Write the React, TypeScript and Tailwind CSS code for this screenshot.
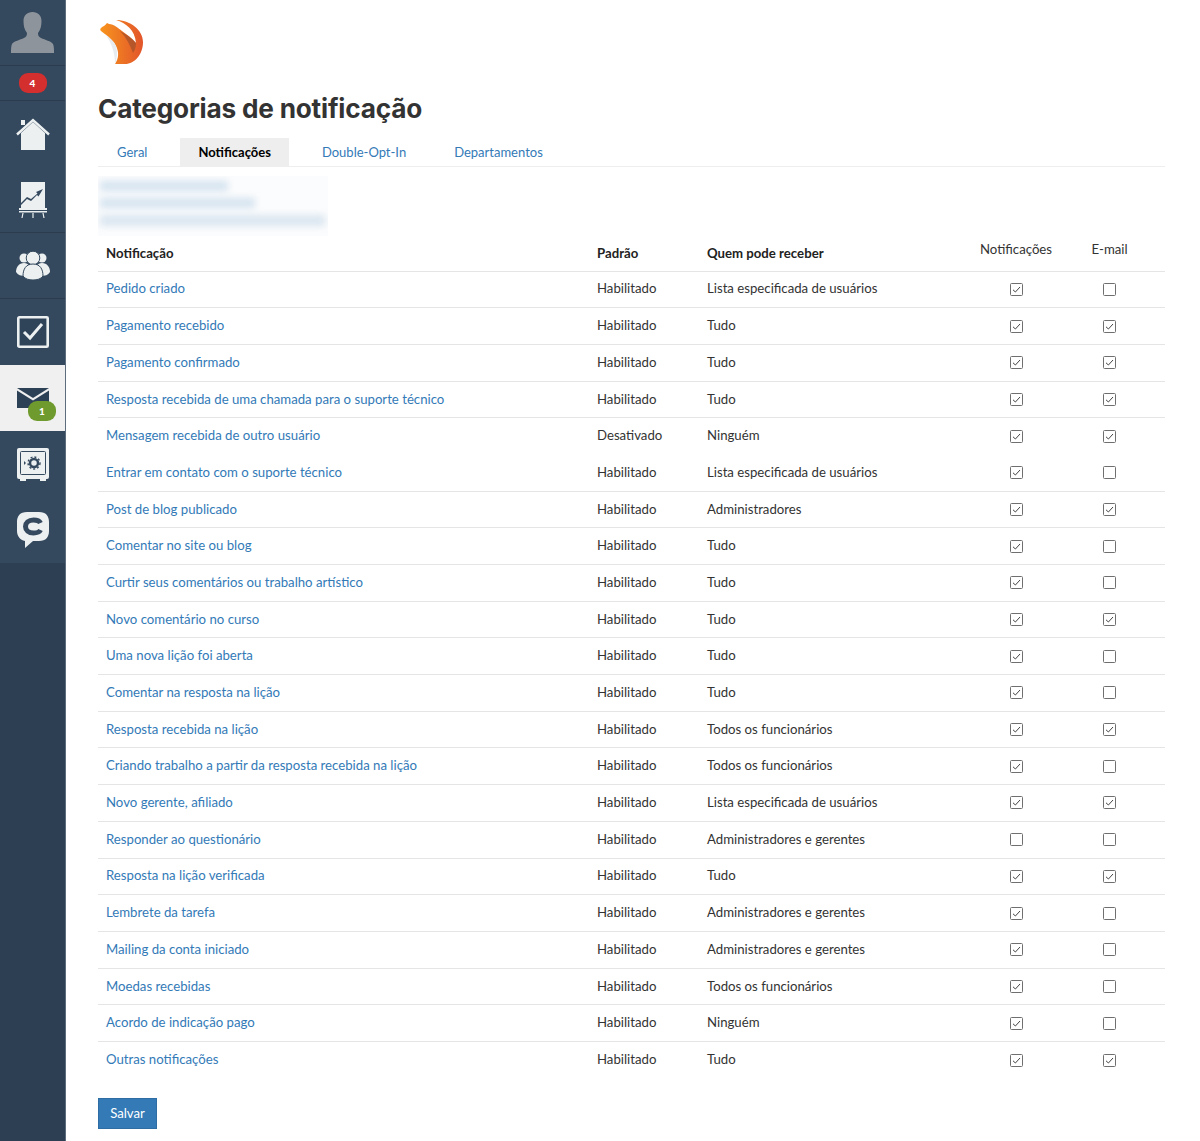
import React from "react";

type R = [string, string, string, boolean, boolean];
const rows: R[] = [
  ["Pedido criado", "Habilitado", "Lista especificada de usuários", true, false],
  ["Pagamento recebido", "Habilitado", "Tudo", true, true],
  ["Pagamento confirmado", "Habilitado", "Tudo", true, true],
  ["Resposta recebida de uma chamada para o suporte técnico", "Habilitado", "Tudo", true, true],
  ["Mensagem recebida de outro usuário", "Desativado", "Ninguém", true, true],
  ["Entrar em contato com o suporte técnico", "Habilitado", "Lista especificada de usuários", true, false],
  ["Post de blog publicado", "Habilitado", "Administradores", true, true],
  ["Comentar no site ou blog", "Habilitado", "Tudo", true, false],
  ["Curtir seus comentários ou trabalho artístico", "Habilitado", "Tudo", true, false],
  ["Novo comentário no curso", "Habilitado", "Tudo", true, true],
  ["Uma nova lição foi aberta", "Habilitado", "Tudo", true, false],
  ["Comentar na resposta na lição", "Habilitado", "Tudo", true, false],
  ["Resposta recebida na lição", "Habilitado", "Todos os funcionários", true, true],
  ["Criando trabalho a partir da resposta recebida na lição", "Habilitado", "Todos os funcionários", true, false],
  ["Novo gerente, afiliado", "Habilitado", "Lista especificada de usuários", true, true],
  ["Responder ao questionário", "Habilitado", "Administradores e gerentes", false, false],
  ["Resposta na lição verificada", "Habilitado", "Tudo", true, true],
  ["Lembrete da tarefa", "Habilitado", "Administradores e gerentes", true, false],
  ["Mailing da conta iniciado", "Habilitado", "Administradores e gerentes", true, false],
  ["Moedas recebidas", "Habilitado", "Todos os funcionários", true, false],
  ["Acordo de indicação pago", "Habilitado", "Ninguém", true, false],
  ["Outras notificações", "Habilitado", "Tudo", true, true],
];

function Check({ on }: { on: boolean }) {
  return (
    <svg width="13" height="13" viewBox="0 0 13 13" className="mx-auto block">
      <rect x="0.5" y="0.5" width="12" height="12" rx="1" fill="#fff" stroke="#6f6f6f" />
      {on && <path d="M3 6.8 L5.4 9 L10 4" fill="none" stroke="#444" strokeWidth="1" />}
    </svg>
  );
}

const Item = ({ children, active, line, h = "h-[66px]" }: { children: React.ReactNode; active?: boolean; line?: boolean; h?: string }) => (
  <div className={`${h} flex items-center justify-center relative ${line ? "border-b border-[#2b3c4e]" : ""} ${active ? "bg-[#f0f0f0]" : ""}`}>
    {children}
  </div>
);

export default function App() {
  return (
    <div className="flex min-h-[1141px] bg-white font-['Lato','Liberation_Sans',sans-serif] text-[13.2px] text-[#333]">
      <aside className="w-[66px] shrink-0 bg-[#2d3f52] border-r border-[#5d6d7d]">
        <div className="bg-[#34495e]">
          <Item line>
            <svg width="43" height="41" viewBox="0 0 43 41">
              <path d="M21.500 0c5.500 0 9 3.500 9 9 0 5-1 9-3.500 12 0 2 .5 4 3 5 4 2 10 3 12 6 1 2 1 6 1 9H0c0-3 0-7 1-9 2-3 8-4 12-6 2.500-1 3-3 3-5-2.500-3-3.500-7-3.500-12 0-5.500 3.500-9 9-9z" fill="#8e949b" />
            </svg>
          </Item>
          <Item line h="h-[35px]">
            <span className="w-[28px] h-[20px] rounded-[9px] bg-[#d32f2f] text-white text-[10px] font-black flex items-center justify-center">4</span>
          </Item>
          <Item>
            <svg width="34" height="32" viewBox="0 0 34 32">
              <path d="M5 15L17 4l12 11v17H5z" fill="#ecf0f1" />
              <path d="M1 16.500L17 2l16 14.500" fill="none" stroke="#ecf0f1" strokeWidth="2.400" />
              <path d="M5 2h4v5H5z" fill="#ecf0f1" />
            </svg>
          </Item>
          <Item line>
            <svg width="28" height="38" viewBox="0 0 28 38">
              <rect x="2" y="1" width="24" height="27" fill="#ecf0f1" />
              <path d="M2 24l6-6 4 2 6-6 1.500 1.500L24 8l-7 3 1.500 1.500L12 18l-4-2-6 6z" fill="#34495e" />
              <path d="M0 27h28v2H0zM0 30h28v1.500H0z" fill="#ecf0f1" />
              <path d="M4 32l-1 5M14 32v5M24 32l1 5" stroke="#ecf0f1" strokeWidth="1.200" />
            </svg>
          </Item>
          <Item line>
            <svg width="34" height="29" viewBox="0 0 34 29">
              <circle cx="8" cy="7" r="4.500" fill="#ecf0f1" />
              <circle cx="26" cy="7" r="4.500" fill="#ecf0f1" />
              <path d="M0 21c0-5 3-9 8-9 5 0 6 4 6 9l-5 4c-4 0-7-1-9-4z" fill="#ecf0f1" />
              <path d="M34 21c0-5-3-9-8-9-5 0-6 4-6 9l5 4c4 0 7-1 9-4z" fill="#ecf0f1" />
              <circle cx="17" cy="7" r="6.800" fill="#ecf0f1" stroke="#34495e" />
              <path d="M7 25c0-7 3-12 10-12s10 5 10 12c-2 3-6 4-10 4s-8-1-10-4z" fill="#ecf0f1" stroke="#34495e" />
            </svg>
          </Item>
          <Item>
            <svg width="32" height="32" viewBox="0 0 32 32">
              <rect x="1.300" y="1.300" width="29.400" height="29.400" rx="1" fill="#2f4459" stroke="#ecf0f1" strokeWidth="2.600" />
              <path d="M7 16l6 6L25 8" fill="none" stroke="#ecf0f1" strokeWidth="3" />
            </svg>
          </Item>
          <Item active>
            <svg width="32" height="20" viewBox="0 0 32 20">
              <path d="M0 0h32L16 10z" fill="#2d4156" />
              <path d="M0 2.500L16 12.500 32 2.500V20H0z" fill="#2d4156" />
            </svg>
            <span className="absolute left-[28px] top-[36px] w-[28px] h-[20px] rounded-[9px] bg-[#6f9a2d] text-white text-[10px] font-black flex items-center justify-center">1</span>
          </Item>
          <Item>
            <svg width="32" height="33" viewBox="0 0 32 33">
              <rect x="0" y="0" width="32" height="31" rx="2" fill="#ecf0f1" />
              <rect x="3.500" y="3.500" width="25" height="23" rx="1" fill="#ecf0f1" stroke="#34495e" />
              <rect x="3" y="31" width="6" height="2" fill="#ecf0f1" />
              <rect x="23" y="31" width="6" height="2" fill="#ecf0f1" />
              <circle cx="17" cy="15" r="4" fill="none" stroke="#34495e" strokeWidth="2.500" />
              <circle cx="17" cy="15" r="6" fill="none" stroke="#34495e" strokeWidth="1.400" strokeDasharray="2 2" />
              <path d="M7 13l2 2-2 2z" fill="#34495e" />
            </svg>
          </Item>
          <Item>
            <svg width="32" height="36" viewBox="0 0 32 36">
              <path d="M10 0h12c7 0 10 4 10 10v9c0 6-3 10-10 10h-6l-8 7v-7c-5-1-8-5-8-10v-9C0 4 3 0 10 0z" fill="#ecf0f1" />
              <path d="M23.500 11c-1-2-3-3-7-3-5 0-8 3-8 6.500s3 6.500 8 6.500c4 0 6-1 7-3" fill="none" stroke="#34495e" strokeWidth="5" />
            </svg>
          </Item>
        </div>
      </aside>

      <main className="flex-1 pl-[32px] pr-[35px]">
        <div className="h-[91px] pt-[20px] pl-[2px]">
          <svg width="44" height="45" viewBox="0 0 44 45">
            <defs>
              <linearGradient id="fox" x1="0" x2="1" y1="0" y2="0">
                <stop offset="0" stopColor="#f7941d" />
                <stop offset="1" stopColor="#e2552b" />
              </linearGradient>
            </defs>
            <path d="M16 0C30 0 43 10 43 22 43 34 35 44 25 44H15C19 38 19 32 16 26 13 20 7 16 1 11 0 10 0 9 1 8 3 6 5 6 7 3L9 4C14 4 18 8 22 11 26 14 32 18 36 23 35 10 26 3 16 0Z" fill="url(#fox)" />
            <path d="M20 11C26 14 32 18 36 23 36 27 35 30 33 33 30 25 26 17 20 11Z" fill="#a9522a" opacity=".8" />
            <path d="M5 14C10 18 14 21 16 26 18 32 17 38 15 44 15 34 12 23 5 14Z" fill="#e9ecef" />
          </svg>
        </div>
        <h1 className="font-['Inter','Liberation_Sans',sans-serif] text-[26.2px] leading-[36px] font-bold text-[#333] tracking-[-0.2px] m-0">Categorias de notificação</h1>
        <nav className="flex h-[29px] mt-[11px] border-b border-[#eeeeee] text-[13px]">
          <a className="px-[19px] leading-[28px] text-[#337ab7]">Geral</a>
          <a className="ml-[14px] px-[18px] leading-[28px] h-[28px] bg-[#eeeeee] font-bold text-black">Notificações</a>
          <a className="ml-[15px] px-[18px] leading-[28px] text-[#337ab7]">Double-Opt-In</a>
          <a className="ml-[12px] px-[18px] leading-[28px] text-[#337ab7]">Departamentos</a>
        </nav>
        <div className="mt-[9px] w-[230px] h-[60px] overflow-hidden bg-[#fbfcfd]">
          <div className="blur-[3.500px] flex flex-col gap-[7px] pt-[5px] pl-[2px]">
            <div className="h-[10px] w-[128px] bg-[#d5e3ef]" />
            <div className="h-[10px] w-[155px] bg-[#d5e3ef]" />
            <div className="h-[11px] w-[225px] bg-[#dae6f0]" />
          </div>
        </div>
        <table className="w-full border-collapse table-fixed">
          <colgroup>
            <col className="w-[491px]" />
            <col className="w-[110px]" />
            <col className="w-[279px]" />
            <col className="w-[76px]" />
            <col />
          </colgroup>
          <thead>
            <tr className="h-[35px]">
              <th className="text-left font-bold px-[8px] text-[#222] pt-[2px]">Notificação</th>
              <th className="text-left font-bold px-[8px] text-[#222] pt-[2px]">Padrão</th>
              <th className="text-left font-bold px-[8px] text-[#222] pt-[2px]">Quem pode receber</th>
              <th className="font-normal pb-[6px] whitespace-nowrap">Notificações</th>
              <th className="font-normal pb-[6px]">E-mail</th>
            </tr>
          </thead>
          <tbody>
            {rows.map((r, i) => (
              <tr key={i} className={`h-[36.7px] border-t-[1.5px] ${i === 5 ? "border-transparent" : "border-[#e5e5e5]"}`}>
                <td className="px-[8px] text-[#337ab7]"><a>{r[0]}</a></td>
                <td className="px-[8px]">{r[1]}</td>
                <td className="px-[8px]">{r[2]}</td>
                <td><Check on={r[3]} /></td>
                <td><Check on={r[4]} /></td>
              </tr>
            ))}
          </tbody>
        </table>
        <button className="mt-[20px] h-[31px] w-[59px] bg-[#337ab7] border border-[#2e6da4] text-white block">Salvar</button>
      </main>
    </div>
  );
}
